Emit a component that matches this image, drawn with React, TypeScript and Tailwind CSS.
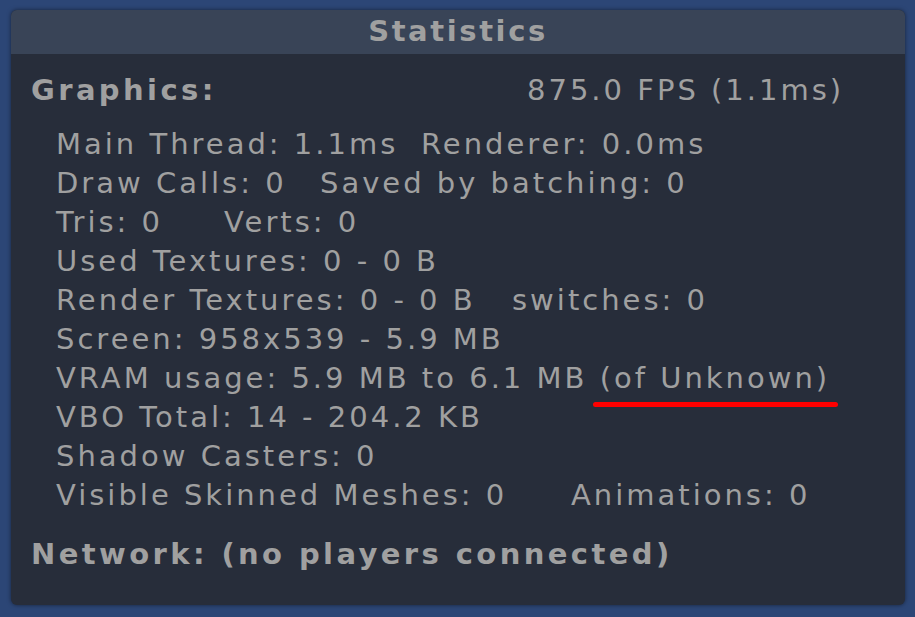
import React from "react";

const font = { fontFamily: '"DejaVu Sans", Verdana, sans-serif' };

type Row = { cols: [string, number?][] };

const rows: Row[] = [
  { cols: [["Main Thread: 1.1ms", 365], ["Renderer: 0.0ms"]] },
  { cols: [["Draw Calls: 0", 264], ["Saved by batching: 0"]] },
  { cols: [["Tris: 0", 168], ["Verts: 0"]] },
  { cols: [["Used Textures: 0 - 0 B"]] },
  { cols: [["Render Textures: 0 - 0 B", 456], ["switches: 0"]] },
  { cols: [["Screen: 958x539 - 5.9 MB"]] },
];

const rowsAfter: Row[] = [
  { cols: [["VBO Total: 14 - 204.2 KB"]] },
  { cols: [["Shadow Casters: 0"]] },
  { cols: [["Visible Skinned Meshes: 0", 515], ["Animations: 0"]] },
];

function StatRow({ row }: { row: Row }) {
  return (
    <div className="flex h-[39px] items-center whitespace-pre">
      {row.cols.map(([text, w], i) => (
        <span key={i} className="shrink-0" style={w ? { width: w } : undefined}>
          {text}
        </span>
      ))}
    </div>
  );
}

export default function App() {
  return (
    <div
      className="w-[915px] h-[617px] bg-[#2c4676] pt-[10px] pl-[11px] pr-[10px] pb-[12px]"
      style={font}
    >
      <div className="flex h-full flex-col overflow-hidden rounded-[6px] bg-[#272d3a] shadow-[0_0_4px_rgba(0,0,0,0.5)] text-[#a0a0a0] text-[29px] tracking-[3px]">
        <div className="flex h-[44px] shrink-0 items-center justify-center bg-[#394457] font-bold tracking-[2.6px]">
          Statistics
        </div>
        <div className="flex flex-col pl-[20px] pt-[17px]">
          <div className="flex h-[39px] items-center whitespace-pre">
            <span className="w-[496px] shrink-0 font-bold tracking-[3.4px]">Graphics:</span>
            <span>875.0 FPS (1.1ms)</span>
          </div>
          <div className="mt-[15px] flex flex-col pl-[25px]">
            {rows.map((r, i) => (
              <StatRow key={i} row={r} />
            ))}
            <div className="flex h-[39px] items-center whitespace-pre">
              <span>VRAM usage: 5.9 MB to 6.1 MB </span>
              <span className="relative">
                (of Unknown)
                <span className="absolute left-[-7px] right-[-8px] top-[45px] h-[5px] rounded-full bg-[#ff0000]" />
              </span>
            </div>
            {rowsAfter.map((r, i) => (
              <StatRow key={i} row={r} />
            ))}
          </div>
          <div className="mt-[20px] flex h-[39px] items-center whitespace-pre font-bold tracking-[3.4px]">
            Network: (no players connected)
          </div>
        </div>
      </div>
    </div>
  );
}
